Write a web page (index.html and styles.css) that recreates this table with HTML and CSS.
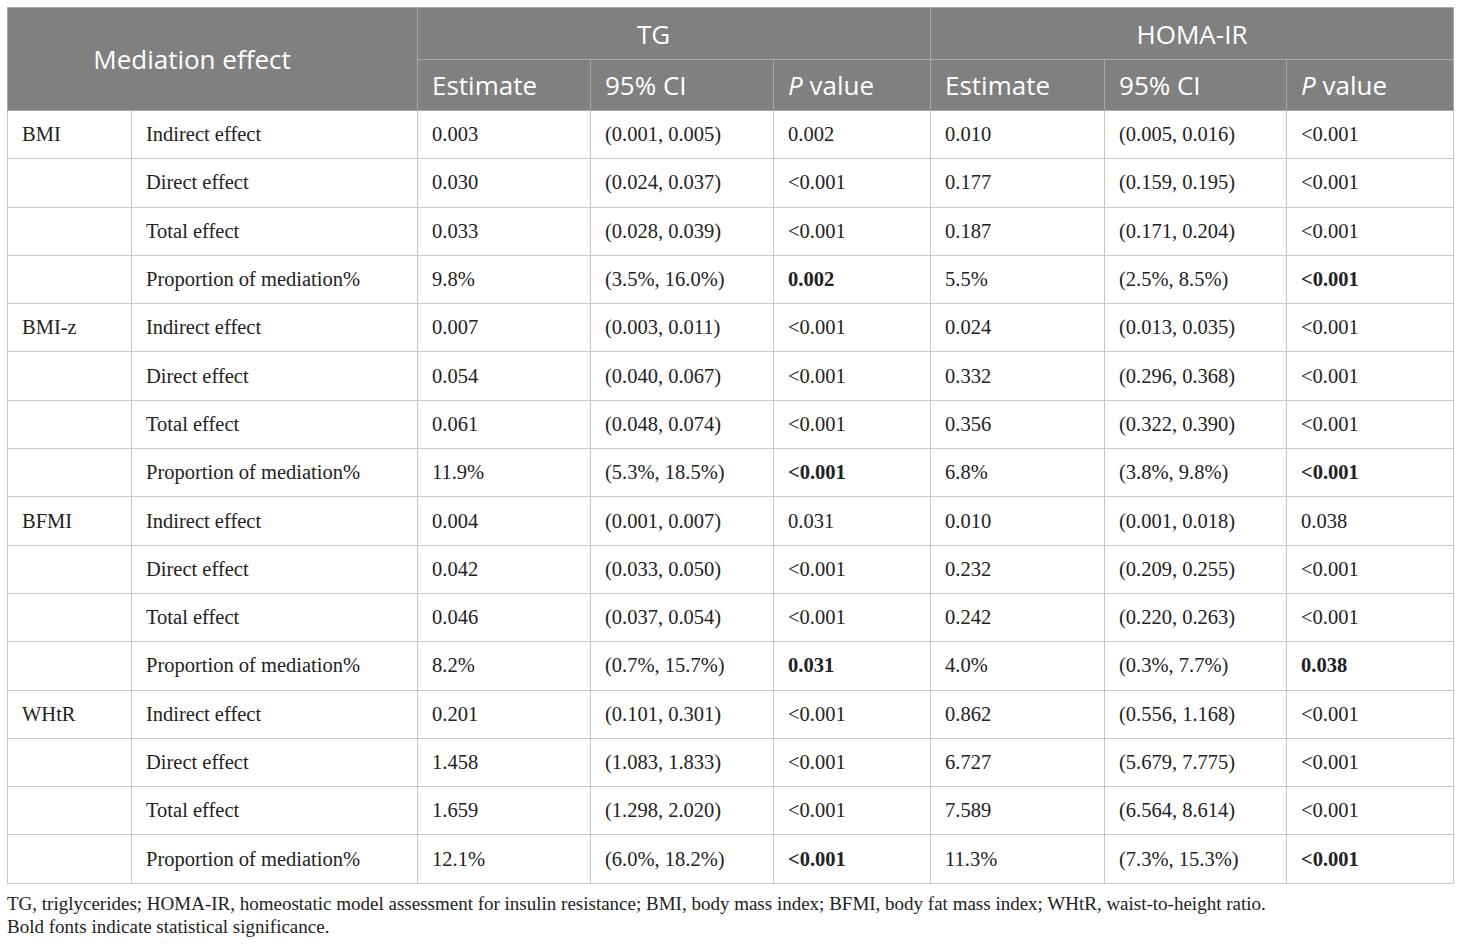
FILE: index.html
```html
<!DOCTYPE html>
<html lang="en">
<head>
    <meta charset="UTF-8">
    <title>Mediation effect</title>
    <link rel="stylesheet" href="styles.css">
</head>
<body>

    <table class="med">
        <colgroup>
            <col class="c-var">
            <col class="c-eff">
            <col class="c-est">
            <col class="c-ci">
            <col class="c-p">
            <col class="c-est2">
            <col class="c-ci2">
            <col class="c-p2">
        </colgroup>
        <thead>
            <tr class="h1">
                <th colspan="2" rowspan="2" class="center shift">Mediation effect</th>
                <th colspan="3" class="center shift">TG</th>
                <th colspan="3" class="center">HOMA-IR</th>
            </tr>
            <tr class="h2">
                <th>Estimate</th>
                <th>95% CI</th>
                <th><i>P</i> value</th>
                <th>Estimate</th>
                <th>95% CI</th>
                <th><i>P</i> value</th>
            </tr>
        </thead>
        <tbody>
            <tr><td>BMI</td><td>Indirect effect</td><td>0.003</td><td>(0.001, 0.005)</td><td>0.002</td><td>0.010</td><td>(0.005, 0.016)</td><td>&lt;0.001</td></tr>
            <tr><td></td><td>Direct effect</td><td>0.030</td><td>(0.024, 0.037)</td><td>&lt;0.001</td><td>0.177</td><td>(0.159, 0.195)</td><td>&lt;0.001</td></tr>
            <tr><td></td><td>Total effect</td><td>0.033</td><td>(0.028, 0.039)</td><td>&lt;0.001</td><td>0.187</td><td>(0.171, 0.204)</td><td>&lt;0.001</td></tr>
            <tr><td></td><td>Proportion of mediation%</td><td>9.8%</td><td>(3.5%, 16.0%)</td><td><b>0.002</b></td><td>5.5%</td><td>(2.5%, 8.5%)</td><td><b>&lt;0.001</b></td></tr>

            <tr><td>BMI-z</td><td>Indirect effect</td><td>0.007</td><td>(0.003, 0.011)</td><td>&lt;0.001</td><td>0.024</td><td>(0.013, 0.035)</td><td>&lt;0.001</td></tr>
            <tr><td></td><td>Direct effect</td><td>0.054</td><td>(0.040, 0.067)</td><td>&lt;0.001</td><td>0.332</td><td>(0.296, 0.368)</td><td>&lt;0.001</td></tr>
            <tr><td></td><td>Total effect</td><td>0.061</td><td>(0.048, 0.074)</td><td>&lt;0.001</td><td>0.356</td><td>(0.322, 0.390)</td><td>&lt;0.001</td></tr>
            <tr><td></td><td>Proportion of mediation%</td><td>11.9%</td><td>(5.3%, 18.5%)</td><td><b>&lt;0.001</b></td><td>6.8%</td><td>(3.8%, 9.8%)</td><td><b>&lt;0.001</b></td></tr>

            <tr><td>BFMI</td><td>Indirect effect</td><td>0.004</td><td>(0.001, 0.007)</td><td>0.031</td><td>0.010</td><td>(0.001, 0.018)</td><td>0.038</td></tr>
            <tr><td></td><td>Direct effect</td><td>0.042</td><td>(0.033, 0.050)</td><td>&lt;0.001</td><td>0.232</td><td>(0.209, 0.255)</td><td>&lt;0.001</td></tr>
            <tr><td></td><td>Total effect</td><td>0.046</td><td>(0.037, 0.054)</td><td>&lt;0.001</td><td>0.242</td><td>(0.220, 0.263)</td><td>&lt;0.001</td></tr>
            <tr><td></td><td>Proportion of mediation%</td><td>8.2%</td><td>(0.7%, 15.7%)</td><td><b>0.031</b></td><td>4.0%</td><td>(0.3%, 7.7%)</td><td><b>0.038</b></td></tr>

            <tr><td>WHtR</td><td>Indirect effect</td><td>0.201</td><td>(0.101, 0.301)</td><td>&lt;0.001</td><td>0.862</td><td>(0.556, 1.168)</td><td>&lt;0.001</td></tr>
            <tr><td></td><td>Direct effect</td><td>1.458</td><td>(1.083, 1.833)</td><td>&lt;0.001</td><td>6.727</td><td>(5.679, 7.775)</td><td>&lt;0.001</td></tr>
            <tr><td></td><td>Total effect</td><td>1.659</td><td>(1.298, 2.020)</td><td>&lt;0.001</td><td>7.589</td><td>(6.564, 8.614)</td><td>&lt;0.001</td></tr>
            <tr><td></td><td>Proportion of mediation%</td><td>12.1%</td><td>(6.0%, 18.2%)</td><td><b>&lt;0.001</b></td><td>11.3%</td><td>(7.3%, 15.3%)</td><td><b>&lt;0.001</b></td></tr>
        </tbody>
    </table>

    <div class="notes">
        <p>TG, triglycerides; HOMA-IR, homeostatic model assessment for insulin resistance; BMI, body mass index; BFMI, body fat mass index; WHtR, waist-to-height ratio.</p>
        <p>Bold fonts indicate statistical significance.</p>
    </div>

</body>
</html>
```

FILE: styles.css
```css
body {
    margin: 0;
    padding: 7px 7px 0 7px;
    background: #fff;
    color: #222;
    font-family: "Liberation Serif", "Times New Roman", serif;
}

.med {
    width: 1446px;
    border-collapse: collapse;
    table-layout: fixed;
    border: 1px solid #c4c4c4;
}

.c-var { width: 124px; }
.c-eff { width: 286px; }
.c-est { width: 173px; }
.c-ci { width: 183px; }
.c-p { width: 157px; }
.c-est2 { width: 174px; }
.c-ci2 { width: 182px; }
.c-p2 { width: 167px; }

thead th {
    background: #808080;
    color: #fff;
    font-family: "Open Sans", sans-serif;
    font-weight: normal;
    font-size: 26px;
    text-align: left;
    padding: 0 14px;
    border: 1px solid #a8a8a8;
}

thead th i {
    font-style: italic;
}

thead .center {
    text-align: center;
}

/* the spanning titles sit a little left of centre */
thead .shift {
    padding-right: 55px;
}

.h1 th {
    height: 51px;
}

.h2 th {
    height: 50px;
}

tbody td {
    height: 47.3px;
    padding: 0 14px;
    font-size: 20.5px;
    border: 1px solid #c8c8c8;
    vertical-align: middle;
    white-space: nowrap;
}

tbody b {
    font-weight: bold;
}

.notes {
    padding-top: 8px;
}

.notes p {
    margin: 0;
    font-size: 19px;
    line-height: 23px;
}
```
